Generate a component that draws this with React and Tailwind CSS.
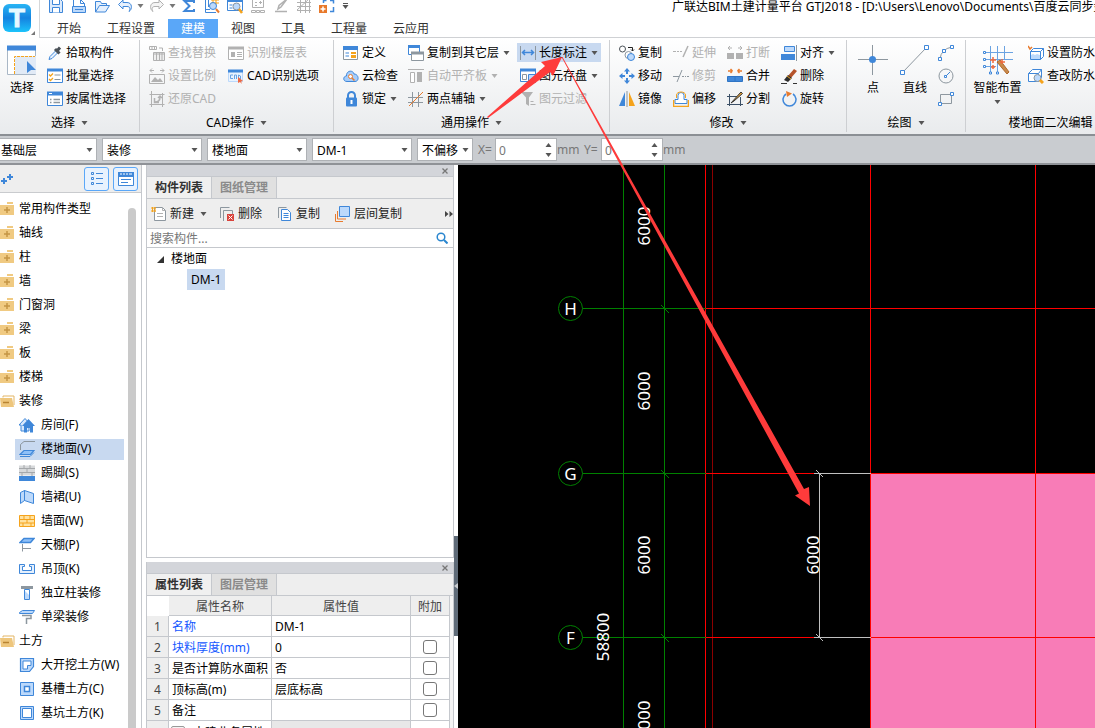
import React, { useState } from 'react'
import clsx from 'clsx'

const B = '#3f87d9'
const L = '#bcd9fb'
const G = '#8d979f'
const O = '#f5a31c'
const D = '#b1b1b1'

const icons = {
  save: <><path d="M1.5 1.5h11l2 2v11h-13z" fill="#dceafb" stroke={B} /><path d="M4.5 1.5v5h7v-5M4.5 14.5v-5h7v5" fill="#fff" stroke={B} /></>,
  doc: <><path d="M2.5 9V1.5h7l4 4V9" fill="#fff" stroke={B} /><path d="M9.5 1.5v4h4" fill="none" stroke={B} /><path d="M1.5 8.5h13v6h-13z" fill={L} stroke={B} /><path d="M4 11.5h8" stroke={B} /></>,
  open: <path d="M1.5 14V3.5h5l1 2h5v2M1.5 14l4-6.5h10l-4 6.500z" fill="#e5f0fd" stroke={B} />,
  undo: <path d="M6 2L1.500 6.500 6 11V8.500h4c3 0 3.500 2 2 5 3.500-2 3.500-9-2-9H6z" fill="#e5f0fd" stroke={B} />,
  redo: <path d="M10 2l4.500 4.500L10 11V8.500H6c-3 0-3.500 2-2 5C.5 11.500.5 4.500 6 4.500h4z" fill="#f4f4f4" stroke={D} />,
  sigma: <path d="M13 5V3H3.500l5 5-5 5H13v-2" fill="none" stroke={B} strokeWidth="2" />,
  planZoom: <><path d="M1.500 0v14.500H12M4.500 0v9M1 11.500h5" fill="none" stroke={B} /><path d="M7 2h8M7 5h8M9 0v7M12 0v7" stroke={O} /><circle cx="9" cy="8" r="3.500" fill={L} stroke={B} /><path d="M12 11l3 3.500" stroke="#e87b2e" strokeWidth="2" /></>,
  winZoom: <><path d="M.5 1.500h15v11H.5z" fill="#fff" stroke={B} /><path d="M0 2.500h16" stroke={B} strokeWidth="3" /><path d="M2.500 7h3M2.500 10h3" stroke={B} /><circle cx="9.500" cy="8.500" r="3.500" fill={L} stroke={G} /><path d="M12 11l3 4" stroke={O} strokeWidth="2.500" /></>,
  cluster: <path d="M2.500 1.500h11v8h-11zM5 4.500h2M9 4.500h3M10.500 3v3M5 7.500h2M1.500 12.500h4v2h-4zM6.500 12.500h3v2h-3zM10.500 12.500h4v2h-4z" fill="none" stroke={D} />,
  pen: <path d="M2 13.500h12M14 1L8 9l-3 2 1-3.500z" fill="none" stroke={D} strokeWidth="1.500" />,
  mesh: <path d="M1 4.500h14M1 8.500h14M1 12.500h14M4.500 1v14M9.500 1v14M13.500 1v14M1 12L13 1" fill="none" stroke={D} />,
  addFrame: <><path d="M0 7h8v8H0z" fill="#e8792b" /><path d="M4 8.500v5M1.500 11h5" stroke="#fff" strokeWidth="1.500" /><path d="M4.500 5V2.500h3M11 2.500h3.500v3M14.500 9v4.500H11" fill="none" stroke={B} strokeWidth="1.500" /></>,
  dropper: <><path d="M2 14.500l1-3 6-6 2 2-6 6z" fill="#e7f1fd" stroke={B} /><path d="M8 4l4.500 4.500M10 6l3-3.500" stroke="#4a5157" strokeWidth="3" /></>,
  batch: <><path d="M.5 1.500h15v13H.5z" fill="#fff" stroke={B} /><path d="M0 2h16" stroke={B} strokeWidth="3" /><path d="M7.500 7h6M7.500 11.500h6" stroke={G} /><path d="M2 6.500l1.500 1.500L6 5.500M2 11l1.500 1.500L6 10" fill="none" stroke={O} strokeWidth="1.300" /></>,
  attrs: <><path d="M.5 1.500h15v13H.5z" fill="#fff" stroke={B} /><path d="M0 2.500h16" stroke={B} strokeWidth="4" /><path d="M2 2.500h3" stroke="#fff" /><path d="M3 8.500h1.500M6.500 8.500H13M3 11.500h1.500M6.500 11.500H13" stroke={G} strokeWidth="1.500" /></>,
  replace: <><path d="M.5 1.500h7v3h-7zM3 1.500v3M5.500 1.500v3M10 3h3.500v3" fill="none" stroke={D} /><path d="M4.500 7.500h11v8h-11z" fill="#eee" stroke={D} /><path d="M4.500 9h11M7.500 8v7M10.500 8v7M13 8v7" stroke={D} /></>,
  ratio: <><path d="M1 2.500h4M1 2.500L3 .5M1 2.500l2 2M11 2.500h4M15 2.500L13 .5M15 2.500l-2 2" stroke={D} /><path d="M.5 6.500h15v9H.5z" fill="none" stroke={D} /><path d="M2 14l4-5 3 3 2-2 3 4z" fill={D} /></>,
  restore: <><path d="M2.500 0v16M.5 3.500h15M13.500 2v14M.5 13.500h15" stroke={D} /><path d="M5.500 7v4.500H10M6 11c4 0 5-2 5-5M9 7l2-2 2 2" fill="none" stroke={D} strokeWidth="1.500" /></>,
  floorTable: <><path d="M.5 2.500h15v12H.5z" fill="#fff" stroke={D} /><path d="M0 3h16" stroke={D} strokeWidth="3" /><path d="M3 7h4v5H3z" fill={D} /><path d="M9 7.500h5M9 9.500h5M9 11.500h5" stroke={D} /></>,
  cadOpt: <><path d="M.5 2.500h14v11H.5z" fill="#eaf3fe" stroke={L} /><path d="M0 3h15" stroke={B} strokeWidth="3" /><path d="M5 7H2.500v3.500H5M6.500 11V7h2v4M10.500 7v4h2V8z" fill="none" stroke="#6aa3e3" /><path d="M10 9l5 4-2 .5 1 2.500-2-2-2 1z" fill="#ef6a45" /></>,
  define: <><path d="M.5 1.500h14v13H.5z" fill="#fff" stroke={G} /><path d="M0 3h15" stroke={B} strokeWidth="4" /><path d="M2.500 8H6M2.500 11H6" stroke={B} /><path d="M8 7h5v2H8zM8 10h5v3H8z" fill={O} /></>,
  cloud: <><path d="M4 13.500C-.5 13.500 0 8 3.500 8 3 2.500 10 1.500 11 6c5 0 5.500 7.500 1 7.500z" fill="#a6cdfa" stroke={B} /><circle cx="7.500" cy="8.500" r="2" fill="#fff" stroke="#e87b2e" /><path d="M9 10l2.500 2.500" stroke="#e87b2e" strokeWidth="1.500" /></>,
  lock: <><path d="M5 7V4.500a3.500 3.500 0 017 0V7" fill="none" stroke={B} strokeWidth="2" /><rect x="3" y="6.500" width="11" height="9" rx="1" fill={B} /><path d="M8.500 9v4" stroke="#fff" strokeWidth="2" /></>,
  copyFloor: <><path d="M.5 1.500h11v8H.5z" fill="#fff" stroke={B} /><path d="M0 1.500h12" stroke={B} strokeWidth="3" /><path d="M3.500 7.500h12v8h-12z" fill="#fff" stroke={G} /><path d="M3 8h13" stroke={G} strokeWidth="3" /></>,
  alignSlab: <><path d="M0 1.500h16" stroke={D} /><path d="M2.500 4.500h4v10h-4z" fill="#fff" stroke={D} /><path d="M9 4h5v10H9z" fill={D} /></>,
  axis: <><path d="M4.500 1v15M10.500 1v15M0 6.500h15M0 11.500h15" stroke={G} /><path d="M1 15L15 1" stroke="#e87b2e" /></>,
  length: <><path d="M.5 1v14M15.500 1v14" stroke={G} /><path d="M3 7.500h10M5 5L2.500 7.500 5 10M11 5l2.500 2.500L11 10" fill="none" stroke={B} strokeWidth="1.500" /></>,
  store: <><path d="M.5 1.500h15v12H.5z" fill="#fff" stroke={B} /><path d="M0 2h16" stroke={B} strokeWidth="3" /><path d="M2.500 6.500h4v5h-4z" fill="none" stroke={G} /><path d="M8.500 6.500h7v8h-7z" fill={L} stroke={B} /></>,
  filter: <><path d="M1 1h12L9 6.500V15l-3-2V6.500z" fill={D} /><path d="M10.500 10.500h3M10.500 13.500h5" stroke={D} /></>,
  copy: <><circle cx="3.500" cy="4" r="3" fill="#fff" stroke="#4a5157" /><path d="M9 2.500h4.500V6M12 4.500L13.500 6 15 4.500" fill="none" stroke="#222" /><circle cx="9.500" cy="10" r="3.500" fill="#fff" stroke={G} /><circle cx="12" cy="12" r="3.500" fill={L} stroke={B} /></>,
  move: <path d="M8 0l3 3.500H9V6H7V3.500H5zM8 16l3-3.500H9V10H7v2.500H5zM0 8l3.500-3v2H6v2H3.500v2zM16 8l-3.500-3v2H10v2h2.500v2z" fill={B} />,
  mirror: <><path d="M6 1v14H0z" fill={B} /><path d="M8 0v16" stroke={G} /><path d="M10 1v14h6z" fill={O} /></>,
  extend: <><path d="M0 6.500h3M4 6.500h2M7 6.500h2" stroke={D} /><path d="M10 12l5-11" stroke={D} strokeWidth="1.500" /></>,
  trim: <><path d="M0 8.500h6M9 8.500h2M12 8.500h1M14 8.500h2" stroke={G} /><path d="M4 14l5-12" stroke={G} /></>,
  offset: <><path d="M5 8.500H2v4h12v-4h-3V4.500a3 3 0 00-6 0z" fill="#fff" stroke={B} /><path d="M.5 9v6.500h15V9" fill="none" stroke={O} strokeWidth="1.500" /><path d="M3.500 7V4c0-4 9-4 9 0v3" fill="none" stroke={O} /></>,
  breakIt: <><path d="M0 8h7v6H0zM9 8h7v6H9z" fill={D} /><path d="M1 3h4M1 3l2-2M1 3l2 2M15 3h-4M15 3l-2-2M15 3l-2 2" stroke={D} /></>,
  merge: <><path d="M.5 8.500h15v5H.5zM8 8.500v5" fill={B} stroke="#2f74c4" /><path d="M1 3h4M5.500 3l-2-2M5.500 3l-2 2M15 3h-4M10.500 3l2-2M10.500 3l2 2" stroke="#e87b2e" strokeWidth="1.500" /></>,
  split: <><path d="M2.500 3v12M13.500 6v9M0 5.500h10M0 13.500h16" stroke="#3b4f66" /><path d="M4 12L14 1l1.500 1.500L7 10z" fill="#e5a23c" stroke="#333" /></>,
  align: <><path d="M3.500 1.500h10v5h-10z" fill={L} stroke={B} /><path d="M0 9h14v6H0z" fill={B} /><path d="M15.500 0v16" stroke={G} /></>,
  erase: <><path d="M0 15.500h6M12 15.500h4" stroke="#333" /><path d="M7 8l6-7 3 2-6 7z" fill="#b5532a" /><path d="M3 12l4-5 4 3-4 4z" fill="#2c2c2c" /><path d="M6 8l4 3" stroke={O} /></>,
  rotate: <><path d="M5 3a6.500 6.500 0 107 0" fill="none" stroke={B} strokeWidth="1.500" /><path d="M5 0l6 2.500L6 6z" fill="#e87b2e" /></>,
  arc: <><path d="M2 14Q3 4 14 2" fill="none" stroke={G} /><path d="M.5 12.500h3v3h-3zM4.500 4.500h3v3h-3zM12.500.5h3v3h-3z" fill="#fff" stroke={B} /></>,
  circle: <><circle cx="8" cy="8" r="7" fill="none" stroke={G} /><path d="M8 8l4-4" stroke={B} /><path d="M6.500 7.500h2v2h-2z" fill="#fff" stroke={B} /></>,
  rect: <><path d="M2.500 3.500h11v9h-11z" fill="none" stroke={G} /><path d="M.5 11.500h3v3h-3zM12.500 1.500h3v3h-3z" fill="#fff" stroke={B} /></>,
  waterSet: <><path d="M2.500 6.500l3-3h10v8l-3 3h-10z" fill="#fff" stroke={B} /><path d="M2.500 6.500h10v8M12.500 6.500l3-3" fill="none" stroke={B} /><path d="M3 10l2-1 2 1 2-1 3 1v4H3z" fill={L} /><path d="M0 1l2 3 2-2" fill="none" stroke="#e87b2e" strokeWidth="1.500" /></>,
  waterFix: <><path d="M.5 5.500l4-4h9v8l-3 4H.5zM.5 5.500h10v8M10.500 5.500l3-4" fill="#fff" stroke={B} /><circle cx="9.500" cy="10" r="3.500" fill={L} stroke={G} /><path d="M12 12l3 3" stroke={O} strokeWidth="3" /></>,
  create: <><path d="M3.500 1.500h8l3 3v10h-11z" fill="#fff" stroke={G} /><path d="M11.500 1.500v3h3M6 7.500h6M6 10.500h6" fill="none" stroke={D} /><path d="M0 2h5M0 5h5M1.500 1v5M4 1v5" stroke={O} /></>,
  remove: <><path d="M1.500 12V1.500h9M4.500 15V4.500h9V9" fill="none" stroke={G} /><path d="M8 8h7v7H8z" fill="#d9433c" /><path d="M9.500 9.500l4 4M13.500 9.500l-4 4" stroke="#fff" /></>,
  dup: <><path d="M1.500 12V1.500h8" fill="none" stroke={G} /><path d="M4.500 3.500h6l3 3v8h-9z" fill="#fff" stroke={B} /><path d="M6.500 7.500h5M6.500 9.500h5M6.500 11.500h5" stroke={B} /></>,
  layerDup: <><path d="M4.500.5h10v10h-10z" fill={L} stroke={B} /><path d="M2.500 5v8H11M.5 8v7.500H8" fill="none" stroke="#e87b2e" /></>,
  room: <><path d="M0 8l6-6.500L12 8h-2v6H2V8z" fill="#d8e8fc" stroke={B} /><path d="M3 9l6.500-7L16 9h-2v6.500h-3V11H8v4.500H5V9z" fill={B} /></>,
  floor: <><path d="M1.500 9V3.500L5 .5h11" fill="none" stroke={G} /><path d="M1 13.500l4-4h10l-3.500 4z" fill="#8fc0f8" stroke={B} strokeWidth="1.200" /><path d="M1 15.500h10l4-4" fill="none" stroke={B} /></>,
  skirting: <><path d="M0 .5h16v10H0z" fill="#d7d9db" /><path d="M0 3.500h16M0 7.500h16M5 0v3.500M11 0v3.500M8 4v3.500M3 8v3M13 8v3" stroke="#a5a8ab" /><path d="M0 11h16v5H0z" fill={B} /></>,
  dado: <path d="M1.500 3.500l4-2v10l-4 3zM5.500 1.500l9 3v10l-9-3z" fill={L} stroke={B} />,
  wall: <><path d="M.5 2.500h15v11H.5z" fill="#ffe2a0" stroke={O} /><path d="M0 6.500h16M0 10h16M5 2v4.500M11 2v4.500M8 6.500V10M4 10v4M12 10v4" stroke={O} /></>,
  canopy: <><path d="M1 5.500l4-4h10l-3.500 4z" fill="#8fc0f8" stroke={B} strokeWidth="1.500" /><path d="M3.500 7v7.500M3.500 11.500H12" fill="none" stroke={G} /></>,
  ceiling: <path d="M.5 3.500h5v2h-2v4h9v-4h-2v-2h5v9H.5z" fill="#e5f0fd" stroke={B} />,
  column: <><path d="M2 1h12v3H2z" fill={G} /><path d="M5.500 4.500h5v10h-5z" fill="#fff" stroke={B} /><path d="M6 6l4 4v4H6z" fill={L} /></>,
  beam: <><path d="M.5 3.500l3-2h12l-2 3H.5z" fill={L} stroke={B} /><path d="M3 6.500h9v3H7.500V15" fill="none" stroke={G} strokeWidth="1.500" /></>,
  dig: <><path d="M1.500 1.500h13v8l-4 5h-9z" fill={L} stroke={B} strokeWidth="1.200" /><path d="M4 4h8v4.500H8.500V12H4z" fill="#fff" stroke={B} /></>,
  groove: <><path d="M1.500 1.500h13v13h-13z" fill={L} stroke={B} /><path d="M5.500 5.500h5v5h-5z" fill="#fff" stroke={B} strokeWidth="1.500" /></>,
  pit: <><path d="M1.500 1.500h13v13h-13z" fill={L} stroke={B} /><path d="M3.500 3.500h9v9h-9z" fill="#fff" stroke={B} /></>,
}

function Icon({ name }) {
  return (
    <svg viewBox="0 0 16 16" className="w-4 h-4 shrink-0" aria-hidden="true">
      {icons[name]}
    </svg>
  )
}

function Caret({ className = 'text-[#555]' }) {
  return (
    <svg viewBox="0 0 7 4" className={clsx('w-[7px] h-1 shrink-0', className)} aria-hidden="true">
      <path d="M0.500 0h6L3.500 4z" fill="currentColor" />
    </svg>
  )
}

function Command({ icon, label, caret, disabled, active }) {
  return (
    <button
      type="button"
      disabled={disabled}
      className={clsx('flex items-center h-[19px] px-[3px] whitespace-nowrap', active && 'bg-[#c8d9f0]', disabled ? 'text-[#b1b1b1]' : 'text-black')}
    >
      <Icon name={icon} />
      <span className="ml-[3px]">{label}</span>
      {caret && <span className="ml-1"><Caret className={disabled ? 'text-[#b1b1b1]' : 'text-[#555]'} /></span>}
    </button>
  )
}

function CommandColumn({ items }) {
  return (
    <div className="flex flex-col items-start gap-1">
      {items.map(item => <Command key={item.label} {...item} />)}
    </div>
  )
}

function RibbonGroup({ title, caret = true, className, children }) {
  return (
    <section className={clsx('flex flex-col shrink-0', className)}>
      <div className="flex h-[74px] pt-[5px]">{children}</div>
      <button type="button" className="flex items-center justify-center gap-[6px] h-[22px] whitespace-nowrap">
        {title}
        {caret && <Caret />}
      </button>
    </section>
  )
}

function Separator() {
  return <div className="w-px h-[92px] mt-0.5 bg-[#cdcfd2] shrink-0" />
}

function BigButton({ label, caret, className, children }) {
  return (
    <button type="button" className={clsx('flex flex-col items-center h-16 pt-0.5 shrink-0 whitespace-nowrap', className)}>
      <svg viewBox="0 0 30 30" className="w-[30px] h-[30px] shrink-0" aria-hidden="true">{children}</svg>
      <span className="mt-[5px]">{label}</span>
      {caret && <span className="mt-1 flex"><Caret /></span>}
    </button>
  )
}

const quickTools = ['save', 'doc', 'open', 'undo', '|', 'redo', '|', 'sigma', 'planZoom', 'winZoom', 'cluster', 'pen', 'mesh', 'addFrame']
const menuTabs = ['开始', '工程设置', '建模', '视图', '工具', '工程量', '云应用']

function Header() {
  const [tab, setTab] = useState('建模')

  return (
    <header className="flex h-[38px] bg-white overflow-hidden shrink-0">
      <div className="w-10 shrink-0 border-r border-[#d5d7d9]">
        <svg viewBox="0 0 39 38" className="w-[39px] h-[38px]" role="img" aria-label="GTJ">
          <defs>
            <linearGradient id="logo" x1="0" y1="0" x2="0" y2="1">
              <stop offset="0" stopColor="#28b4f4" />
              <stop offset="0.500" stopColor="#1583e0" />
              <stop offset="1" stopColor="#1cc3fb" />
            </linearGradient>
          </defs>
          <rect x="3" y="4" width="28" height="28" rx="6" fill="url(#logo)" />
          <text x="17" y="27" textAnchor="middle" fontSize="26" fontWeight="bold" fill="#e9f9ff" stroke="#e9f9ff" fontFamily="Liberation Sans, sans-serif">T</text>
          <path d="M35 31v4h-4z" fill="#777" />
        </svg>
      </div>
      <div className="flex flex-col flex-1 min-w-0 border-b border-[#cfd1d4]">
        <div className="flex items-end h-[14px] pl-1 mb-[5px]">
          {quickTools.map((tool, i) => tool === '|' ? (
            <button key={i} type="button" aria-label="更多" className="flex items-center justify-center w-[9px] h-4 shrink-0"><Caret className="text-[#777]" /></button>
          ) : (
            <button key={i} type="button" aria-label={tool} className="flex items-center justify-center w-[23px] h-4 shrink-0"><Icon name={tool} /></button>
          ))}
          <button type="button" aria-label="自定义" className="flex flex-col items-center justify-center gap-px w-[14px] h-4 shrink-0">
            <span className="w-[5px] h-px bg-[#555]" />
            <Caret />
          </button>
          <h1 className="ml-[320px] h-[15px] leading-4 whitespace-nowrap text-black">广联达BIM土建计量平台 GTJ2018 - [D:\Users\Lenovo\Documents\百度云同步盘]</h1>
        </div>
        <nav className="flex h-[18px] pl-1">
          {menuTabs.map(name => (
            <button
              key={name}
              type="button"
              onClick={() => setTab(name)}
              className={clsx('h-[19px] px-[13px] whitespace-nowrap', name === tab ? 'bg-[#5aa7f8] text-white' : 'text-[#333]')}
            >
              {name}
            </button>
          ))}
        </nav>
      </div>
    </header>
  )
}

function Ribbon() {
  return (
    <div className="flex h-[98px] bg-linear-to-b from-white to-[#e9ebed] border-b-2 border-[#8b8f94] overflow-hidden shrink-0">
      <RibbonGroup title="选择" className="w-[139px]">
        <BigButton label="选择" className="w-11">
          <path d="M.5 1.500h28v28H.5z" fill="#fff" stroke="#a9b7c6" />
          <path d="M0 3h29" stroke={B} strokeWidth="5" />
          <path d="M8 11h21v18H8z" fill="#e1eaf6" />
          <path d="M7.500 29V11.500H28" fill="none" stroke={O} strokeDasharray="3 1" />
          <path d="M20 16l9 9h-5l-4 3z" fill={B} />
        </BigButton>
        <CommandColumn items={[
          { icon: 'dropper', label: '拾取构件' },
          { icon: 'batch', label: '批量选择' },
          { icon: 'attrs', label: '按属性选择' },
        ]} />
      </RibbonGroup>
      <Separator />
      <RibbonGroup title="CAD操作" className="w-[193px]">
        <div className="flex gap-[6px] pl-[6px]">
          <CommandColumn items={[
            { icon: 'replace', label: '查找替换', disabled: true },
            { icon: 'ratio', label: '设置比例', disabled: true },
            { icon: 'restore', label: '还原CAD', disabled: true },
          ]} />
          <CommandColumn items={[
            { icon: 'floorTable', label: '识别楼层表', disabled: true },
            { icon: 'cadOpt', label: 'CAD识别选项' },
          ]} />
        </div>
      </RibbonGroup>
      <Separator />
      <RibbonGroup title="通用操作" className="w-[275px]">
        <div className="flex gap-1 pl-[6px]">
          <CommandColumn items={[
            { icon: 'define', label: '定义' },
            { icon: 'cloud', label: '云检查' },
            { icon: 'lock', label: '锁定', caret: true },
          ]} />
          <CommandColumn items={[
            { icon: 'copyFloor', label: '复制到其它层', caret: true },
            { icon: 'alignSlab', label: '自动平齐板', caret: true, disabled: true },
            { icon: 'axis', label: '两点辅轴', caret: true },
          ]} />
          <CommandColumn items={[
            { icon: 'length', label: '长度标注', caret: true, active: true },
            { icon: 'store', label: '图元存盘', caret: true },
            { icon: 'filter', label: '图元过滤', disabled: true },
          ]} />
        </div>
      </RibbonGroup>
      <Separator />
      <RibbonGroup title="修改" className="w-[236px]">
        <div className="flex gap-[5px] pl-[6px]">
          <CommandColumn items={[
            { icon: 'copy', label: '复制' },
            { icon: 'move', label: '移动' },
            { icon: 'mirror', label: '镜像' },
          ]} />
          <CommandColumn items={[
            { icon: 'extend', label: '延伸', disabled: true },
            { icon: 'trim', label: '修剪', disabled: true },
            { icon: 'offset', label: '偏移' },
          ]} />
          <CommandColumn items={[
            { icon: 'breakIt', label: '打断', disabled: true },
            { icon: 'merge', label: '合并' },
            { icon: 'split', label: '分割' },
          ]} />
          <CommandColumn items={[
            { icon: 'align', label: '对齐', caret: true },
            { icon: 'erase', label: '删除' },
            { icon: 'rotate', label: '旋转' },
          ]} />
        </div>
      </RibbonGroup>
      <Separator />
      <RibbonGroup title="绘图" className="w-[118px]">
        <BigButton label="点" className="w-[46px] ml-[3px]">
          <path d="M14.500 0v30M0 14.500h30" stroke={G} />
          <circle cx="14.500" cy="14.500" r="3.500" fill={B} />
        </BigButton>
        <BigButton label="直线" className="w-[38px]">
          <path d="M3 27L26 3" stroke={G} />
          <path d="M.5 25.500h4v4h-4zM24.500.5h4v4h-4z" fill="#fff" stroke={B} />
        </BigButton>
        <div className="flex flex-col gap-[7px] pt-0.5 pl-1">
          {['arc', 'circle', 'rect'].map(name => (
            <button key={name} type="button" aria-label={name} className="w-4 h-4"><Icon name={name} /></button>
          ))}
        </div>
      </RibbonGroup>
      <Separator />
      <RibbonGroup title="楼地面二次编辑" caret={false} className="w-[169px]">
        <BigButton label="智能布置" caret className="w-[55px] ml-1">
          <path d="M0 7.500h30M0 14.500h30M0 21.500h13M7.500 1v28M14.500 1v28M21.500 1v14" stroke="#6ba3e2" />
          <path d="M.5 6.500h2v2h-2zM.5 13.500h2v2h-2zM.5 20.500h2v2h-2zM6.500 27h2v2h-2zM13.500 27h2v2h-2z" fill="#fff" stroke={B} />
          <path d="M14 17l10 12 2-2-9-12z" fill="#c98a4b" stroke="#b0692c" />
          <path d="M7 15h6M10 12v6M8 22h4M10 20v4M17 17h5M19 14v5" stroke="#ee6a3c" strokeWidth="1.500" />
        </BigButton>
        <CommandColumn items={[
          { icon: 'waterSet', label: '设置防水卷边' },
          { icon: 'waterFix', label: '查改防水卷边' },
        ]} />
      </RibbonGroup>
    </div>
  )
}

function Picker({ label, value, className }) {
  return (
    <label className={clsx('relative flex shrink-0 h-[23px]', className)}>
      <span className="sr-only">{label}</span>
      <select className="appearance-none w-full h-full pl-1 pt-0.5 bg-white border border-[#aeb1b5] text-black outline-none" defaultValue={value}>
        <option>{value}</option>
      </select>
      <span className="absolute right-1 top-[10px] flex pointer-events-none"><Caret /></span>
    </label>
  )
}

function OffsetInput({ axis }) {
  return (
    <label className="flex items-center h-[23px] text-[#777]">
      <span className="w-[17px]">{axis}=</span>
      <span className="flex w-[62px] h-[23px] bg-white border border-[#aeb1b5]">
        <input defaultValue="0" className="flex-1 min-w-0 pl-[3px] pt-0.5 outline-none" />
        <span className="flex flex-col justify-center gap-1.5 pr-1">
          <span className="flex rotate-180"><Caret /></span>
          <Caret />
        </span>
      </span>
      <span className="w-[22px]">mm</span>
    </label>
  )
}

function ContextBar() {
  return (
    <div className="flex items-center gap-[5px] h-[29px] bg-[#c9ccd0] border-b-2 border-[#8f9297] overflow-hidden shrink-0">
      <Picker label="楼层" value="基础层" className="w-[101px] -ml-1" />
      <Picker label="构件分类" value="装修" className="w-[100px]" />
      <Picker label="构件类型" value="楼地面" className="w-[100px]" />
      <Picker label="构件" value="DM-1" className="w-[100px]" />
      <Picker label="偏移" value="不偏移" className="w-14" />
      <OffsetInput axis="X" />
      <OffsetInput axis="Y" />
    </div>
  )
}

const categories = ['常用构件类型', '轴线', '柱', '墙', '门窗洞', '梁', '板', '楼梯']
const decoration = [
  ['room', '房间(F)'],
  ['floor', '楼地面(V)'],
  ['skirting', '踢脚(S)'],
  ['dado', '墙裙(U)'],
  ['wall', '墙面(W)'],
  ['canopy', '天棚(P)'],
  ['ceiling', '吊顶(K)'],
  ['column', '独立柱装修'],
  ['beam', '单梁装修'],
]
const earthwork = [
  ['dig', '大开挖土方(W)'],
  ['groove', '基槽土方(C)'],
  ['pit', '基坑土方(K)'],
]

function FolderRow({ label, open }) {
  return (
    <li className="flex items-center h-6">
      <svg viewBox="0 0 15 14" className="w-[15px] h-[14px] shrink-0" aria-hidden="true">
        {open ? (
          <>
            <path d="M3 3.500V2h11v9" fill="#fff" stroke="#e3b565" />
            <path d="M0 4h12l2 9H1z" fill="#eec67c" />
            <path d="M3 8.500h6" stroke="#b88432" strokeWidth="1.500" />
          </>
        ) : (
          <>
            <path d="M7 0h6v2H7zM0 3h14v10H0z" fill="#f0ca82" />
            <path d="M7 5v6M4 8h6" stroke="#c49545" strokeWidth="1.500" />
          </>
        )}
      </svg>
      <span className="ml-1 whitespace-nowrap">{label}</span>
    </li>
  )
}

function ComponentRow({ icon, label, selected }) {
  return (
    <li className="flex items-center h-6 pl-[15px] pr-1">
      <button type="button" className={clsx('flex items-center flex-1 h-[21px] pl-1 gap-[6px] whitespace-nowrap', selected && 'bg-[#c8d9f0]')}>
        <Icon name={icon} />
        {label}
      </button>
    </li>
  )
}

function Sidebar() {
  return (
    <aside className="flex flex-col w-[142px] shrink-0 bg-white border-r border-[#c5c8cd]">
      <div className="flex items-center gap-1 h-7 pr-[3px] bg-[#eee] border-b border-[#c9cbce] shrink-0">
        <svg viewBox="0 0 14 14" className="w-[14px] h-[14px] mr-auto" aria-hidden="true">
          <path d="M4 6v6M1 9h6M10 2v6M7 5h6" stroke={B} strokeWidth="2" />
        </svg>
        <button type="button" aria-label="列表" className="flex items-center justify-center w-[25px] h-6 rounded-[3px] border border-[#5aa7f8] bg-[#e8f2fe]">
          <svg viewBox="0 0 16 16" className="w-4 h-4"><path d="M2.500 1.500h2v2h-2zM2.500 6.500h2v2h-2zM2.500 11.500h2v2h-2zM7 2.500h7M7 7.500h7M7 12.500h7" fill="none" stroke={B} /></svg>
        </button>
        <button type="button" aria-label="面板" className="flex items-center justify-center w-[25px] h-6 rounded-[3px] border border-[#5aa7f8] bg-[#e8f2fe]">
          <svg viewBox="0 0 16 16" className="w-4 h-4"><path d="M.5 1.500h15v13H.5z" fill="#fff" stroke={B} /><path d="M0 1h16v5H0z" fill={B} /><path d="M2 3h2M5 3h2M8 3h2M11 3h3" stroke="#fff" /><path d="M3 8.500h10M3 11.500h7" stroke={B} /></svg>
        </button>
      </div>
      <div className="flex flex-1 min-h-0 overflow-hidden">
        <ul className="flex-1 min-w-0 pt-1">
          {categories.map(name => <FolderRow key={name} label={name} />)}
          <FolderRow label="装修" open />
          {decoration.map(([icon, label]) => <ComponentRow key={label} icon={icon} label={label} selected={icon === 'floor'} />)}
          <FolderRow label="土方" open />
          {earthwork.map(([icon, label]) => <ComponentRow key={label} icon={icon} label={label} />)}
        </ul>
        <div className="w-2 mt-[15px] mr-[5px] rounded-t-full bg-[#cacaca] shrink-0" />
      </div>
    </aside>
  )
}

function PanelHead({ tabs }) {
  return (
    <>
      <div className="flex items-center justify-end h-3 pr-1 bg-[#d3d5da] border-b border-[#c5c8cd] shrink-0">
        <button type="button" aria-label="关闭" className="flex">
          <svg viewBox="0 0 8 8" className="w-2 h-2"><path d="M1.500 1.500l5 5M6.500 1.500l-5 5" stroke="#777" strokeWidth="1.300" /></svg>
        </button>
      </div>
      <div className="flex h-[22px] bg-[#eee] border-b border-[#c5c8cd] shrink-0 font-bold">
        {tabs.map((name, i) => (
          <button key={name} type="button" className={clsx('px-2 border-r border-[#c5c8cd] whitespace-nowrap', i === 0 ? 'bg-[#f0f0f0] text-[#333]' : 'bg-[#e0e0e0] text-[#8a8a8a]')}>
            {name}
          </button>
        ))}
      </div>
    </>
  )
}

function ToolButton({ icon, label }) {
  return (
    <button type="button" className="flex items-center gap-[3px] text-[#222] whitespace-nowrap">
      <Icon name={icon} />
      {label}
    </button>
  )
}

const properties = [
  { name: '名称', value: 'DM-1', blue: true, plain: true },
  { name: '块料厚度(mm)', value: '0', blue: true },
  { name: '是否计算防水面积', value: '否' },
  { name: '顶标高(m)', value: '层底标高' },
  { name: '备注', value: '' },
]

function PropertyTable() {
  return (
    <table className="table-fixed w-[303px] border-separate border-spacing-0">
      <colgroup>
        <col className="w-[22px]" />
        <col className="w-[103px]" />
        <col className="w-[139px]" />
        <col className="w-[39px]" />
      </colgroup>
      <thead>
        <tr className="h-5 text-[#444]">
          <td className="p-0 bg-white" />
          <th className="border-r border-b border-[#c5c8cd] bg-[#eee] p-0 pt-0.5 font-normal">属性名称</th>
          <th className="border-r border-b border-[#c5c8cd] bg-[#eee] p-0 pt-0.5 font-normal">属性值</th>
          <th className="border-r border-b border-[#c5c8cd] bg-[#eee] p-0 pt-0.5 font-normal">附加</th>
        </tr>
      </thead>
      <tbody>
        {properties.map((row, i) => (
          <tr key={row.name} className="h-[21px]">
            <td className="border-r border-b border-[#c5c8cd] bg-[#eee] p-0 pt-0.5 text-center text-[#444]">{i + 1}</td>
            <td className={clsx('border-r border-b border-[#c5c8cd] p-0 pt-0.5 pl-[3px] whitespace-nowrap', row.blue && 'text-[#1457ff]')}>{row.name}</td>
            <td className="border-r border-b border-[#c5c8cd] p-0 pt-0.5 pl-[3px]">{row.value}</td>
            <td className="border-r border-b border-[#c5c8cd] p-0">
              {!row.plain && <input type="checkbox" aria-label={row.name} className="block mx-auto appearance-none w-[14px] h-[14px] border border-[#777] rounded-[3px] bg-white" />}
            </td>
          </tr>
        ))}
        <tr className="h-[21px]">
          <td className="border-r border-[#c5c8cd] bg-[#eee] p-0 pt-0.5 text-center text-[#444]">6</td>
          <td className="border-r border-[#c5c8cd] p-0 pt-0.5 pl-0.5">
            <div className="flex items-center gap-2 whitespace-nowrap">
              <button type="button" aria-label="展开" className="w-[14px] h-[14px] border border-[#999] rounded-[2px] bg-[#f4f4f4] leading-3">+</button>
              土建业务属性
            </div>
          </td>
          <td className="border-r border-[#c5c8cd] bg-[#e8e8e8]" />
          <td className="border-r border-[#c5c8cd]" />
        </tr>
      </tbody>
    </table>
  )
}

function Panels() {
  return (
    <div className="flex flex-col w-[308px] ml-1 shrink-0 overflow-hidden">
      <section className="flex flex-col shrink-0 border-x border-[#c5c8cd]">
        <PanelHead tabs={['构件列表', '图纸管理']} />
        <div className="flex items-center h-[30px] pl-1 bg-[#eee] border-b border-[#c5c8cd]">
          <ToolButton icon="create" label="新建" />
          <span className="ml-[6px] mr-3"><Caret /></span>
          <div className="flex gap-[15px]">
            <ToolButton icon="remove" label="删除" />
            <ToolButton icon="dup" label="复制" />
            <ToolButton icon="layerDup" label="层间复制" />
          </div>
          <button type="button" aria-label="更多" className="ml-auto">
            <svg viewBox="0 0 8 6" className="w-2 h-[6px]"><path d="M0 0l3.500 3L0 6zM4.500 0L8 3 4.500 6z" fill="#444" /></svg>
          </button>
        </div>
        <label className="flex items-center h-[19px] pl-[3px] pr-[5px] bg-white border-b border-[#c5c8cd]">
          <input type="search" aria-label="搜索构件" placeholder="搜索构件..." className="flex-1 min-w-0 pt-0.5 outline-none placeholder:text-[#777]" />
          <svg viewBox="0 0 12 12" className="w-3 h-3"><circle cx="5" cy="5" r="3.800" fill="none" stroke="#2a86cf" strokeWidth="1.500" /><path d="M8 8l3.500 3.500" stroke="#2a86cf" strokeWidth="2" /></svg>
        </label>
        <div className="h-[310px] pt-px bg-white border-b border-[#c5c8cd]">
          <div className="flex items-center h-5 pl-[10px]">
            <svg viewBox="0 0 7 7" className="w-[7px] h-[7px]"><path d="M7 0v7H0z" fill="#333" /></svg>
            <span className="ml-[7px]">楼地面</span>
          </div>
          <button type="button" className="ml-10 px-1 h-[21px] bg-[#c8d9f0]">DM-1</button>
        </div>
      </section>
      <section className="flex flex-col flex-1 min-h-0 mt-1 border-x border-[#c5c8cd] overflow-hidden">
        <PanelHead tabs={['属性列表', '图层管理']} />
        <div className="flex-1 bg-[#f4f4f4]"><div className="w-[303px] bg-white"><PropertyTable /></div></div>
      </section>
    </div>
  )
}

const gridAxes = [
  { name: 'H', y: 143.5 },
  { name: 'G', y: 308.5 },
  { name: 'F', y: 472.5 },
]
const dimensions = [
  { x: 186, y: 61, text: '6000' },
  { x: 186, y: 226, text: '6000' },
  { x: 186, y: 390, text: '6000' },
  { x: 186, y: 555, text: '6000' },
  { x: 355, y: 390, text: '6000' },
  { x: 145, y: 472, text: '58800' },
]

function Drawing() {
  return (
    <main className="relative flex-1 min-w-0 bg-black overflow-hidden">
      <svg className="absolute inset-0 w-full h-full" fontFamily="Noto Sans, sans-serif" fontSize="17">
        <rect x="413" y="309" width="100%" height="100%" fill="#f87cb7" />
        <g stroke="#008000" shapeRendering="crispEdges">
          <line x1="165.500" x2="165.500" y1="0" y2="100%" />
          <line x1="206.500" x2="206.500" y1="0" y2="100%" />
        </g>
        <g stroke="#f00" shapeRendering="crispEdges">
          <line x1="247.500" x2="247.500" y1="0" y2="100%" />
          <line x1="254.500" x2="254.500" y1="0" y2="100%" stroke="#8b0000" />
          <line x1="412.500" x2="412.500" y1="0" y2="100%" />
          <line x1="577.500" x2="577.500" y1="0" y2="100%" />
        </g>
        {gridAxes.map(({ name, y }) => (
          <g key={name}>
            <line x1="124" x2="248" y1={y} y2={y} stroke="#008000" shapeRendering="crispEdges" />
            <line x1="248" x2="100%" y1={y} y2={y} stroke="#f00" shapeRendering="crispEdges" />
            <path d={`M203 ${y - 3.5}l8 8`} stroke="#008000" />
            <circle cx="112.500" cy={y} r="12" fill="#000" stroke="#008000" />
            <text x="112.500" y={y + 6} textAnchor="middle" fill="#fff">{name}</text>
          </g>
        ))}
        <path d="M356 308.500h57M356 472.500h57M361.500 309v164" stroke="#c0c0c0" fill="none" shapeRendering="crispEdges" />
        <path d="M358 305l7 7M358 469l7 7" stroke="#c0c0c0" />
        {dimensions.map(({ x, y, text }) => (
          <text key={`${x}-${y}`} transform={`translate(${x + 6} ${y}) rotate(-90)`} textAnchor="middle" fill="#fff">{text}</text>
        ))}
      </svg>
    </main>
  )
}

export default function App() {
  return (
    <div className="relative flex flex-col h-screen overflow-hidden bg-white text-xs leading-4 text-black font-['Noto_Sans','Noto_Sans_CJK_SC',sans-serif]">
      <Header />
      <Ribbon />
      <ContextBar />
      <div className="flex flex-1 min-h-0">
        <Sidebar />
        <Panels />
        <div className="w-1 pt-[371px] shrink-0">
          <button type="button" aria-label="收起" className="flex items-center w-1 h-[100px] bg-[#5f6b78]">
            <svg viewBox="0 0 4 6" className="w-1 h-[6px]"><path d="M4 0v6L0 3z" fill="#c9ccd0" /></svg>
          </button>
        </div>
        <Drawing />
      </div>
      {/* Annotation arrows */}
      <svg className="absolute inset-0 w-full h-full pointer-events-none" fill="#fe3b3b" aria-hidden="true">
        <path d="M487 117L545 66l-4-4 21-5-9 19-3-4-62 46z" />
        <path d="M561.500 57L799 493.500l-4 2 15 10.500-1-19-5 2L562.500 57z" />
      </svg>
    </div>
  )
}
